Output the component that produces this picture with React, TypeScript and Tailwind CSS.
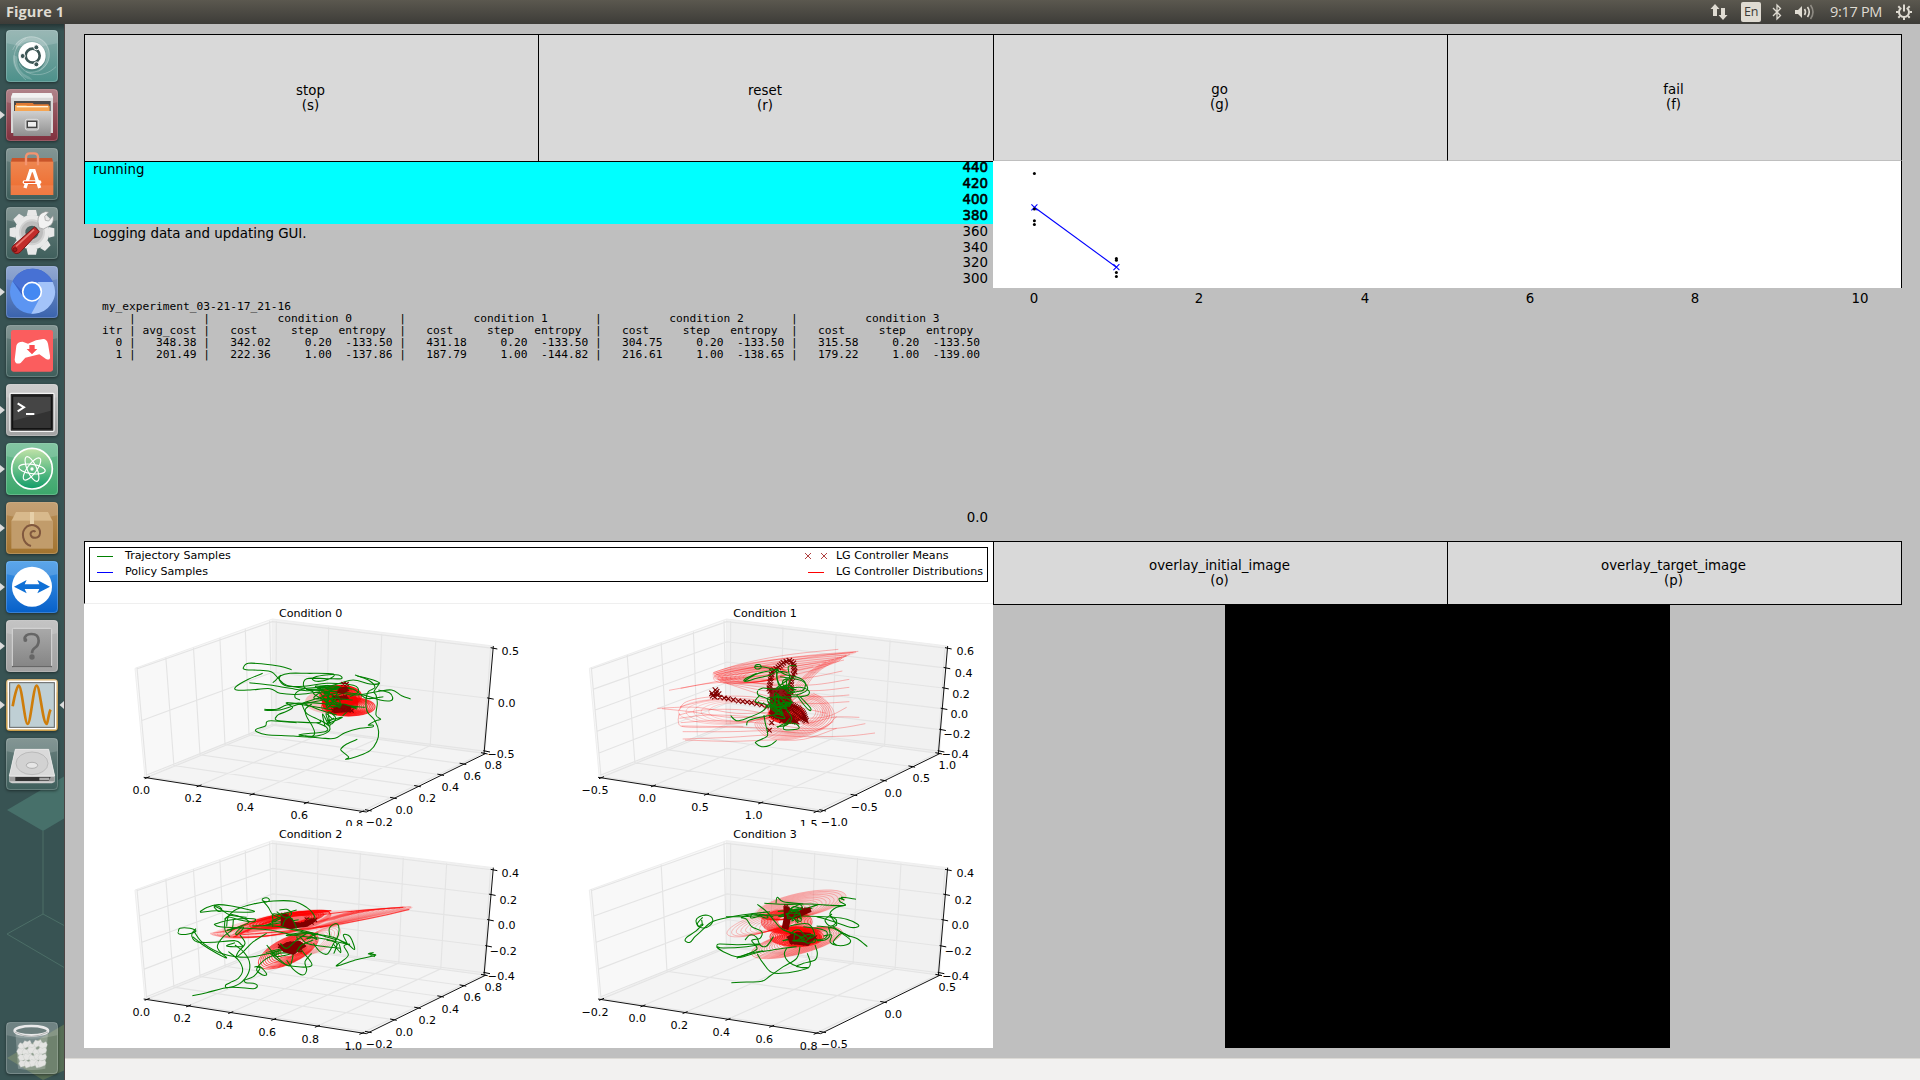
import React from "react";

type Pt = [number, number];

/* ---------- geometry helpers ---------- */

const pts = (s: string): Pt[] => s.trim().split(/\s+/).map((p) => p.split(",").map(Number) as Pt);

const smooth = (p: Pt[]) => {
  let d = `M${p[0][0]} ${p[0][1]}`;
  for (let i = 0; i < p.length - 1; i++) {
    const a = p[i - 1] || p[i];
    const b = p[i];
    const c = p[i + 1];
    const e = p[i + 2] || c;
    d += `C${(b[0] + (c[0] - a[0]) / 6).toFixed(1)} ${(b[1] + (c[1] - a[1]) / 6).toFixed(1)} ${(c[0] - (e[0] - b[0]) / 6).toFixed(1)} ${(c[1] - (e[1] - b[1]) / 6).toFixed(1)} ${c[0]} ${c[1]}`;
  }
  return d;
};

const tangle = (cx: number, cy: number, rx: number, ry: number, seed: number, n: number) => {
  const p: Pt[] = [];
  let s = seed;
  const rnd = () => {
    s = (s * 16807) % 2147483647;
    return s / 2147483647;
  };
  for (let i = 0; i < n; i++) {
    const a = rnd() * Math.PI * 2;
    const r = 0.25 + 0.75 * rnd();
    p.push([Math.round(cx + rx * r * Math.cos(a)), Math.round(cy + ry * r * Math.sin(a))]);
  }
  return smooth(p);
};

const along = (s: string, step: number): Pt[] => {
  const p = pts(s);
  const out: Pt[] = [];
  for (let i = 0; i < p.length - 1; i++) {
    const len = Math.hypot(p[i + 1][0] - p[i][0], p[i + 1][1] - p[i][1]);
    const n = Math.max(1, Math.round(len / step));
    for (let j = 0; j < n; j++)
      out.push([p[i][0] + ((p[i + 1][0] - p[i][0]) * j) / n, p[i][1] + ((p[i + 1][1] - p[i][1]) * j) / n]);
  }
  out.push(p[p.length - 1]);
  return out;
};

const Crosses = ({ at, r = 6 }: { at: Pt[]; r?: number }) => (
  <path
    d={at.map(([x, y]) => `M${x - r} ${y - r}l${2 * r} ${2 * r}m0 ${-2 * r}l${-2 * r} ${2 * r}`).join("")}
    stroke="#800000"
    strokeWidth="3.4"
    fill="none"
  />
);

const Green = ({ lines }: { lines: string[] }) => (
  <g stroke="#008000" strokeWidth="3.2" fill="none" strokeLinejoin="round">
    {lines.map((l, i) => (
      <path key={i} d={l[0] === "M" ? l : smooth(pts(l))} />
    ))}
  </g>
);

const Rings = ({ cx, cy, rx, ry, rot = 0, n = 8, k = 0.75, dx = 0, dy = 0, o = 0.5, w = 2.5 }: { cx: number; cy: number; rx: number; ry: number; rot?: number; n?: number; k?: number; dx?: number; dy?: number; o?: number; w?: number }) => (
  <g fill="none" stroke="#ff0000" strokeWidth={w} strokeOpacity={o}>
    {Array.from({ length: n }, (_, i) => {
      const t = i / n;
      const x = cx + dx * t;
      const y = cy + dy * t;
      return <ellipse key={i} cx={x} cy={y} rx={rx * (1 - k * t)} ry={ry * (1 - k * t * 0.8)} transform={`rotate(${rot} ${x} ${y})`} />;
    })}
  </g>
);

/* ---------- 3D axes ---------- */

const mix = (a: Pt, b: Pt, t: number, k: number): Pt => {
  const f = t / (t + k * (1 - t));
  return [a[0] + (b[0] - a[0]) * f, a[1] + (b[1] - a[1]) * f];
};

const seg = (a: Pt, b: Pt, c?: Pt) => `M${a[0]} ${a[1]}L${b[0]} ${b[1]}${c ? `L${c[0]} ${c[1]}` : ""}`;

type Label = [string, number, number];

const Axes = ({ nx, ny, nz }: { nx: number; ny: number; nz: number }) => {
  const range = (n: number) => Array.from({ length: n + 1 }, (_, i) => i / n);
  const grid: string[] = [];
  const ticks: string[] = [];
  range(nx).forEach((t) => {
    const f = mix([82, 532], [726, 634], t, 1.045);
    const b = mix([468, 374], [1090, 459], t, 1.033);
    const u = mix([469, 63], [1112, 141], t, 1.033);
    grid.push(seg(f, b, u));
    ticks.push(seg([f[0] - 8, f[1] + 4], [f[0] + 7, f[1] - 2]));
  });
  range(ny).forEach((t) => {
    const f = mix([745, 631], [1093, 460], t, 0.905);
    const b = mix([80, 530], [456, 376], t, 0.9);
    const u = mix([51, 203], [449, 62], t, 0.9);
    grid.push(seg(f, b, u));
    ticks.push(seg([f[0] - 10, f[1] - 2], [f[0] + 10, f[1] + 2]));
  });
  range(nz).forEach((t) => {
    const l = mix([78, 526], [50, 207], t, 0.95);
    const c = mix([459, 373], [457, 65], t, 0.97);
    const r = mix([1099, 454], [1121, 145], t, 0.95);
    grid.push(seg(l, c, r));
    ticks.push(seg([r[0] - 9, r[1] - 2], [r[0] + 11, r[1] + 2]));
  });
  return (
    <g>
      <path d="M45 205L457 57V372L75 533Z" fill="#f8f8f8" />
      <path d="M457 57L1120 138L1097 462L457 372Z" fill="#f1f1f1" />
      <path d="M75 533L457 372L1100 460L735 636Z" fill="#f4f4f4" />
      <path d="M45 205L457 57L1120 138M457 57V372M45 205L75 533M457 372L1100 460M75 533L457 372" fill="none" stroke="#eeeeee" strokeWidth="3" />
      <path d={grid.join("")} fill="none" stroke="#e4e4e4" strokeWidth="3.4" />
      <path d="M71 532L739 636L1098 460M1092 462L1120 138" fill="none" stroke="#000" strokeWidth="2.8" />
      <path d={ticks.join("")} fill="none" stroke="#000" strokeWidth="3" />
    </g>
  );
};

const Panel = ({ view, dx, dy, n, title, labels, clip, children }: { view: string; dx: number; dy: number; n: [number, number, number]; title: string; labels: Label[]; clip?: boolean; children: React.ReactNode }) => (
  <svg viewBox={view} preserveAspectRatio="none" className={clip ? "block h-[222px] w-full overflow-hidden" : "block h-[222px] w-full overflow-visible"}>
    <g transform={`translate(${dx} ${dy})`}>
      <Axes nx={n[0]} ny={n[1]} nz={n[2]} />
      <text x={572} y={51 - (dy ? 2 : 0)} fontSize="33.3" textAnchor="middle" fontFamily="DejaVu Sans, sans-serif">
        {title}
      </text>
    </g>
    {children}
    <g fontSize="33.3" textAnchor="middle" fontFamily="DejaVu Sans, sans-serif">
      {labels.map(([t, x, y], i) => (
        <text key={i} x={x} y={y + 11}>
          {t}
        </text>
      ))}
    </g>
  </svg>
);

const Condition0 = () => (
  <Panel
    clip
    view="-108 12 1362 666"
    dx={0}
    dy={0}
    n={[4, 5, 2]}
    title="Condition 0"
    labels={[
      ["0.0", 64, 570], ["0.2", 220, 595], ["0.4", 376, 622], ["0.6", 538, 646], ["0.8", 703, 673],
      ["−0.2", 778, 666], ["0.0", 853, 630], ["0.2", 922, 595], ["0.4", 991, 562], ["0.6", 1057, 528], ["0.8", 1120, 496],
      ["0.5", 1171, 153], ["0.0", 1160, 311], ["−0.5", 1143, 462],
    ]}
  >
    <ellipse cx="640" cy="305" rx="85" ry="38" fill="#ff0000" opacity=".2" />
    <Rings cx={662} cy={288} rx={62} ry={32} n={10} k={0.7} o={0.85} w={4} />
    <Rings cx={685} cy={320} rx={80} ry={28} n={10} k={0.7} o={0.7} w={3.8} />
    <ellipse cx="660" cy="308" rx="55" ry="36" fill="#f40000" opacity=".85" />
    <Green
      lines={[
        "515,209 480,199 430,192 385,190 370,203 378,209 420,211 455,216 475,235 500,256 560,266",
        "428,220 385,238 348,260 350,270 390,270 450,266 480,280 540,283 600,275",
        "388,248 450,255 510,265 560,272 610,268 690,262",
        "458,248 466,242 480,228 510,220 560,220 640,222 625,238 590,244 578,235 610,226 655,225 664,236 620,236 560,236 552,260 580,276",
        "482,225 478,240 500,258 560,258 620,250 700,256 715,275 690,290",
        "433,331 480,330 520,318 560,308 620,312 680,318 735,322",
        "433,328 470,328 500,315 545,310 600,330 650,345",
        "465,356 475,344 500,334 518,322 500,308 570,318 640,330",
        "465,356 475,362 530,366 590,368 600,362 560,340 545,310",
        "590,368 620,382 615,395 550,402 540,406 590,408 625,395 627,378 600,360",
        "530,368 455,362 440,366 436,378 408,388 412,396 440,404 520,408 600,414 645,415 675,398 720,385 757,381 758,375 745,375 768,362 782,358 768,345 772,310 768,285 762,275 775,255 778,248",
        "705,225 745,240 765,262 745,275 738,300 742,335 765,362 776,395 770,425 750,452 715,468 678,478 686,471 664,452 664,445 680,432 712,418",
        "712,228 760,240 778,250 750,252 700,240 660,250 620,262",
        "775,270 808,278 818,292 812,302 780,300 730,285 650,275",
        "620,268 700,285 770,275 815,270 845,287 872,297",
        "575,312 556,328 560,350 575,375 584,398 575,410 555,408",
        "540,300 525,292 532,275 560,265 640,262 700,268 740,295 790,290",
        tangle(630, 272, 85, 20, 71, 16),
        tangle(605, 298, 78, 30, 913, 15),
        tangle(630, 352, 38, 30, 4471, 12),
        tangle(675, 325, 60, 28, 2231, 8),
      ]}
    />
    <path d="M657 264L680 258L688 272L668 282L650 278ZM640 290L680 286L688 296L650 301ZM640 322L668 312L695 322L690 336L640 340Z" fill="#800000" opacity=".9" />
    <Crosses at={pts("670,252 680,252 645,294 660,294 675,290 640,332 655,320 670,330 685,325 695,332")} />
    <Green lines={[tangle(655, 300, 55, 42, 51, 11)]} />
  </Panel>
);

const FAN = [
  "430,218 520,190 650,165 805,148",
  "428,222 540,192 700,168 865,154",
  "432,226 560,200 720,172 858,156",
  "434,230 580,212 740,188 830,168",
  "436,234 580,226 700,208 822,180",
  "440,238 540,232 680,222 790,190 815,175",
  "444,238 560,240 700,235 817,213",
  "448,240 570,250 720,255 838,238",
  "450,244 580,262 730,272 838,262",
  "460,248 600,275 740,290 838,285",
  "470,250 580,285 700,310 838,305",
  "297,271 400,252 470,240 560,236 660,245",
  "332,265 420,250 520,246 640,260",
  "262,325 380,322 500,340 620,335",
  "276,326 360,335 480,352 600,350",
  "330,320 420,300 520,296 620,308",
  "328,330 350,305 430,290 560,292 680,320 770,340",
  "326,345 400,330 520,330 640,350 760,352 830,322",
  "328,355 420,345 560,352 690,372 790,352 868,352",
  "332,368 440,362 580,370 700,385 800,385 886,371",
  "335,378 460,380 600,385 740,390 800,350",
  "338,395 480,395 600,392 720,398 790,365",
  "338,417 480,412 600,405 700,410 830,408 915,399",
  "345,420 480,424 600,420 700,418 800,385",
  "328,340 325,365 340,380 420,382 520,380",
];

const Condition1 = () => (
  <Panel
    clip
    view="-96 12 1365 666"
    dx={13}
    dy={0}
    n={[4, 4, 5]}
    title="Condition 1"
    labels={[
      ["−0.5", 75, 570], ["0.0", 232, 595], ["0.5", 390, 622], ["1.0", 551, 646], ["1.5", 716, 673],
      ["−1.0", 793, 666], ["−0.5", 883, 621], ["0.0", 970, 579], ["0.5", 1054, 535], ["1.0", 1132, 496],
      ["0.6", 1186, 153], ["0.4", 1181, 219], ["0.2", 1173, 282], ["0.0", 1168, 343], ["−0.2", 1161, 402], ["−0.4", 1156, 463],
    ]}
  >
    <path d={smooth(pts("428,222 500,195 620,175 740,165 860,156 770,190 720,230 640,260 540,255 440,240 428,222"))} fill="#ff0000" opacity=".1" />
    <g fill="none" stroke="#ff0000" strokeOpacity=".3" strokeWidth="2.8">
      {FAN.map((l, i) => (
        <path key={i} d={smooth(pts(l))} />
      ))}
      {Array.from({ length: 7 }, (_, i) => (
        <path key={i} d={`M${430 + i * 4} ${218 + i * 3}C${500 + i * 5} ${190 + i * 8} ${640 + i * 4} ${172 + i * 7} ${850 - i * 20} ${158 + i * 7}`} />
      ))}
      {Array.from({ length: 7 }, (_, i) => (
        <path key={i} d={`M${840 - i * 12} ${162 + i * 4}C${790 - i * 7} ${190 + i} ${745 - i * 6} ${200 + i * 2} ${715 - i * 8} ${250 + i * 3}S${690 - i * 4} 280 660 310`} />
      ))}
    </g>
    <g fill="none" stroke="#ff0000" strokeOpacity=".3" strokeWidth="2.6">
      {Array.from({ length: 9 }, (_, i) => (
        <path key={i} d={`M${730 - i * 6} ${280 + i * 3}C${790 - i * 6} ${310 + i} ${815 - i * 7} ${350 - i * 2} ${770 - i * 8} ${380 - i}S${620 + i * 2} ${440 - i * 6} ${575 + i * 5} ${400 - i * 3}S${570 + i * 4} 360 600 350`} />
      ))}
    </g>
    <Rings cx={725} cy={330} rx={56} ry={48} rot={10} n={6} k={0.5} o={0.22} w={2.4} />
    <Rings cx={460} cy={335} rx={135} ry={38} n={5} k={0.4} dx={60} o={0.22} w={2.4} />
    <Rings cx={535} cy={225} rx={105} ry={24} rot={-6} n={8} k={0.4} dx={60} o={0.25} w={2.4} />
    <ellipse cx="650" cy="342" rx="55" ry="30" fill="#ff0000" opacity=".8" />
    <path d="M598 265L655 260L665 300L640 345L600 340ZM600 340L650 335L680 350L650 375Z" fill="#800000" opacity=".9" />
    <Crosses at={along("450,292 475,296 505,303 545,308 590,318", 14)} r={7} />
    <Crosses at={pts("436,270 426,280 438,281 446,282 434,290 428,287 440,275")} r={8} />
    <Crosses at={along("598,265 602,240 606,215 625,202 640,188 658,182 670,190 674,215 664,240 662,275 640,300", 8)} r={8} />
    <Crosses at={along("610,300 660,312 685,325 700,340 708,362 690,350 660,325 630,330 605,345 640,355 680,365", 6)} r={8} />
    <Crosses at={pts("605,368 598,391 600,274 620,280 645,270 658,285 615,350 635,362 652,362")} r={7} />
    <Green
      lines={[
        "555,205 556,196 570,194 573,204 560,207 555,200 580,201 610,208 630,215 650,225 690,235 706,250 700,270 680,275 650,280",
        "524,243 560,222 600,212 625,208 600,225 560,235 528,244 524,238 560,220",
        "620,208 622,240 640,265 660,245 655,200 680,198",
        "565,270 580,264 610,268 650,265 690,262 716,272 714,285 690,290 640,290",
        "563,272 565,285 600,300 620,320",
        "690,290 700,300 722,325 718,331 700,312 680,285",
        "570,285 556,305 590,315 575,335 530,355 500,362 482,347",
        "530,376 535,362 570,352 610,345 640,340",
        "582,345 586,370 592,395 590,410 560,424 558,430 575,440 600,436 620,421",
        "622,383 640,372 670,370 687,380 680,388 640,386 660,355",
        "620,380 650,375 665,355 650,330",
        "630,230 665,235 700,245 712,270 670,285 640,265",
        tangle(630, 300, 38, 34, 77, 20),
        tangle(622, 328, 38, 38, 5177, 14),
        tangle(655, 262, 40, 26, 9112, 10),
        tangle(635, 235, 20, 45, 331, 6),
      ]}
    />
  </Panel>
);

const Condition2 = () => (
  <Panel
    view="-108 18 1362 666"
    dx={0}
    dy={5}
    n={[5, 5, 4]}
    title="Condition 2"
    labels={[
      ["0.0", 64, 576], ["0.2", 187, 595], ["0.4", 313, 616], ["0.6", 442, 637], ["0.8", 571, 658], ["1.0", 700, 678],
      ["−0.2", 778, 672], ["0.0", 853, 636], ["0.2", 922, 601], ["0.4", 991, 567], ["0.6", 1057, 531], ["0.8", 1120, 501],
      ["0.4", 1171, 159], ["0.2", 1165, 240], ["0.0", 1160, 315], ["−0.2", 1150, 393], ["−0.4", 1144, 468],
    ]}
  >
    <path d="M270 341C330 315 380 300 430 290C520 265 600 265 635 272C720 270 800 262 870 259C890 262 870 270 830 276C740 295 640 325 560 335C470 350 380 358 330 357C300 350 270 347 270 341Z" fill="#ff0000" opacity=".16" />
    <g fill="none" stroke="#ff0000" strokeOpacity=".28" strokeWidth="2.4">
      {Array.from({ length: 12 }, (_, i) => (
        <path key={i} d={`M${640 - i * 6} ${300 + i}C${700 - i * 3} ${275 + i * 0.5} ${800 - i * 8} ${264 + i * 0.4} ${868 - i * 16} ${260 + i * 1.4}C${895 - i * 16} ${262 + i} ${800 - i * 10} ${280 + i} ${600 - i * 5} ${322 + i}`} />
      ))}
      {Array.from({ length: 9 }, (_, i) => (
        <path key={i} d={`M${270 + i * 10} ${340 - i * 0.5}C${360 + i * 4} ${330 - i * 3} ${420 + i * 4} ${290 - i} ${560 + i * 4} ${273}C${660} ${262 + i} ${640} ${285 + i * 2} ${560} ${318 + i}S${340} ${365 - i} ${275 + i * 8} ${343}`} />
      ))}
    </g>
    <g fill="none" stroke="#ff0000" strokeWidth="3.4" strokeOpacity=".7">
      <path d="M330 335C400 290 520 270 634 272L560 280C480 290 390 320 340 352M600 322C700 306 790 288 868 268M600 285C700 270 790 266 850 262" />
      <path d="M350 345C420 340 520 335 600 320M345 350C420 310 500 285 620 275M380 335C440 300 540 280 600 285" />
    </g>
    <path d="M335 345C400 300 500 272 634 271C600 300 540 325 460 330C400 334 360 345 335 345Z" fill="#ff0000" opacity=".45" />
    <Rings cx={500} cy={300} rx={112} ry={20} rot={-9} n={8} k={0.6} dx={10} o={0.6} w={4} />
    <Rings cx={505} cy={392} rx={98} ry={38} rot={-26} n={11} k={0.65} dx={15} dy={-8} o={0.65} w={3} />
    <Rings cx={600} cy={362} rx={70} ry={28} rot={-30} n={6} k={0.4} dx={-30} dy={8} o={0.25} w={2.4} />
    <Green
      lines={[
        "240,275 262,262 290,254 330,257 380,268 402,275 340,276 290,272 240,277",
        "282,256 298,260 305,270 295,274 282,260 300,266 330,285 380,292",
        "427,242 428,236 443,234 448,241 438,246 429,243 445,262 460,285 500,300",
        "320,320 325,290 350,268 400,252 460,243 520,244 560,262 580,282 583,298 560,295",
        "285,312 330,300 400,296 400,305 360,300 320,292 315,330 330,350",
        "282,312 300,320 380,325 450,330 520,345 600,355 650,365 690,375",
        "175,335 180,325 210,325 228,333 205,342 180,343 173,337",
        "228,326 216,340 218,355 232,366 280,367 345,362 362,372 365,380 320,378 345,368",
        "218,350 245,372 290,400 320,414 300,395 292,378 310,350 335,330 340,300",
        "222,334 250,370 310,402 380,412 440,402 500,385",
        "360,345 375,370 355,395 350,410 370,395 400,365 440,340",
        "325,395 355,420 368,450 355,475 330,488 317,495 322,503 360,490 385,460 388,425 370,395 345,375",
        "217,527 260,518 330,502 400,506 412,497 400,490 378,488 374,480 400,470 420,445 410,442",
        "403,441 420,440 440,462 428,465 410,447 440,415 480,400",
        "500,420 520,448 548,465 560,450 555,425 575,400",
        "450,400 500,435 575,437 545,390 530,350",
        "440,375 470,410 508,438 520,400",
        "480,320 560,338 640,352 680,372 670,345 690,350 704,388 680,370 640,352",
        "630,350 628,325 645,311 656,318 655,345 640,372 622,402 600,395 580,370",
        "620,360 650,370 642,400 655,370 662,398 640,372",
        "690,372 672,378 685,405 665,425 650,438 700,422 766,406 745,402 760,398 750,404 765,410",
        "540,350 560,370 600,378 660,385",
        "395,318 460,318 540,330 600,345 650,360",
        tangle(475, 298, 70, 26, 911, 10),
        tangle(350, 320, 45, 38, 404, 8),
        tangle(500, 388, 85, 34, 6121, 13),
        tangle(550, 345, 65, 26, 733, 9),
      ]}
    />
    <path d="M482 290L495 278L512 290L520 305L545 308L575 295L590 302L562 320L510 327L482 318ZM475 380L500 366L540 362L560 378L520 405L490 396Z" fill="#800000" />
    <Crosses at={pts("560,298 575,308 585,300 550,312 490,285 500,300 480,378 500,388 520,396 540,390 550,375 515,370")} />
    <Green lines={["470,275 490,290 515,296 530,325", "478,270 500,268 515,282 495,300 488,318", "480,370 500,385 530,360 560,340", "530,395 545,375 580,360", "470,285 500,278 530,270"]} />
  </Panel>
);

const Condition3 = () => (
  <Panel
    view="-96 18 1365 666"
    dx={13}
    dy={5}
    n={[5, 2, 4]}
    title="Condition 3"
    labels={[
      ["−0.2", 75, 576], ["0.0", 202, 595], ["0.2", 328, 616], ["0.4", 454, 637], ["0.6", 583, 658], ["0.8", 716, 678],
      ["−0.5", 793, 672], ["0.0", 970, 583], ["0.5", 1132, 501],
      ["0.4", 1186, 159], ["0.2", 1180, 240], ["0.0", 1171, 315], ["−0.2", 1165, 393], ["−0.4", 1157, 468],
    ]}
  >
    <ellipse cx="690" cy="255" rx="140" ry="36" transform="rotate(-12 690 255)" fill="#ff0000" opacity=".1" />
    <Rings cx={695} cy={255} rx={136} ry={36} rot={-12} n={12} k={0.7} dx={-50} dy={25} o={0.3} w={2.2} />
    <Rings cx={580} cy={308} rx={114} ry={28} rot={-17} n={9} k={0.6} dx={60} dy={0} o={0.3} w={2.2} />
    <Rings cx={680} cy={368} rx={140} ry={35} rot={-14} n={15} k={0.7} dx={20} dy={-12} o={0.38} w={2.6} />
    <Rings cx={650} cy={305} rx={76} ry={36} n={12} k={0.7} o={0.6} w={3.2} />
    <Rings cx={680} cy={350} rx={80} ry={30} n={12} k={0.8} o={0.7} w={3.2} />
    <ellipse cx="705" cy="352" rx="50" ry="22" fill="#ff0000" opacity=".75" />
    <Green
      lines={[
        "395,312 385,320 378,302 388,290 412,286 428,298 420,316 398,324 382,312 398,292",
        "400,312 375,335 350,352 346,363 360,367 375,350 395,332 425,306 470,293 540,282 600,275",
        "395,300 398,318",
        "468,290 520,290 600,285 700,288 790,292 830,298 862,312 864,320 840,322 800,308 740,290",
        "583,250 640,253 720,252 780,256 826,256 810,245 808,235 822,240 815,232 858,238",
        "618,250 622,232 640,245 700,252",
        "562,253 590,275 615,305 640,330 700,350",
        "826,256 800,262 780,280 790,300 800,315 775,325",
        "786,282 765,300 780,318 797,310 798,298 780,288",
        "440,378 448,372 500,374 570,372 530,380 460,384 440,380 460,395 500,410 540,400 580,392",
        "500,415 560,388 545,362 570,355 575,335 545,320 530,298 515,292 560,282 610,290",
        "502,413 520,410 560,398 640,385 680,380",
        "525,360 540,345 560,352 570,375 590,378 610,350",
        "562,402 580,430 615,460 715,443 712,400",
        "484,488 530,486 575,484 600,468 640,440 680,415 690,380",
        "650,385 643,402 655,425 690,442 716,443 680,440 700,430 735,420 742,400 735,375",
        "760,348 785,345 780,365 800,376 830,374 842,362 830,350 790,325 740,318",
        "790,322 830,345 862,356 892,380",
        "840,350 815,340 790,365 800,376",
        "775,320 780,345 765,360 740,362",
        "700,320 740,325 770,335 765,355 730,360",
        tangle(670, 265, 92, 15, 19, 13),
        tangle(655, 288, 55, 32, 88, 10),
        tangle(560, 288, 40, 12, 555, 7),
        tangle(680, 345, 85, 38, 23, 9),
      ]}
    />
    <path d="M640 258L658 260L662 278L685 272L720 262L725 275L692 290L662 300L655 330L635 325L642 290ZM650 350L680 335L720 338L738 352L715 378L660 372Z" fill="#800000" />
    <Crosses at={pts("648,260 650,280 646,310 700,268 715,270 665,345 680,355 700,345 720,350 735,352 670,368 705,370")} />
    <Green lines={[tangle(688, 352, 46, 32, 7070, 16), tangle(665, 285, 40, 36, 42, 9)]} />
  </Panel>
);

/* ---------- cost chart ---------- */

const Y_TICKS: [string, number][] = [
  ["440", 167.3], ["420", 183.3], ["400", 199.3], ["380", 215.3], ["360", 231.3], ["340", 247.3], ["320", 262.3], ["300", 278.3],
];
const X_TICKS: [string, number][] = [["0", 1034], ["2", 1199], ["4", 1365], ["6", 1530], ["8", 1695], ["10", 1860]];

const CostChart = () => (
  <svg viewBox="993 161 909 127" className="block h-[127px] w-[909px] overflow-visible">
    <rect x="993" y="161" width="909" height="127" fill="#fff" />
    <path d="M1901.5 161V288" stroke="#000" />
    <path d="M1034.4 207.3L1116.4 267.2" stroke="#0000ff" strokeWidth="1.1" />
    <path d="M1031.4 204.3l6 6m0 -6l-6 6M1113.4 264.2l6 6m0 -6l-6 6" stroke="#0000ff" strokeWidth="1.1" />
    {[[1034.4, 173.5], [1034.4, 209], [1034.4, 220.7], [1034.4, 224.5], [1116.4, 258.5], [1116.4, 260.3], [1116.4, 272.5], [1116.4, 276.5]].map(([x, y], i) => (
      <circle key={i} cx={x} cy={y} r="1.5" />
    ))}
    <g fontSize="13.33" fontFamily="DejaVu Sans, sans-serif">
      {Y_TICKS.map(([t, y], i) => (
        <text key={t} x="988" y={y + 4.6} textAnchor="end" stroke={i < 4 ? "#000" : "none"} strokeWidth="0.6">
          {t}
        </text>
      ))}
      {X_TICKS.map(([t, x]) => (
        <text key={t} x={x} y="302.500" textAnchor="middle">
          {t}
        </text>
      ))}
      <text x="988" y="521.500" textAnchor="end">
        0.0
      </text>
    </g>
  </svg>
);

/* ---------- launcher icons ---------- */

const Gloss = () => <path d="M6 2H150Q154 2 154 8V40Q78 60 2 40V8Q2 2 6 2Z" fill="#fff" opacity=".16" />;

const DashIcon = () => (
  <>
    <g fill="none" stroke="#fff" strokeOpacity=".25" strokeWidth="3">
      <path d="M20 60C40 10 110 5 128 60C140 110 90 135 60 125M60 150C10 110 15 50 60 25M150 110C110 150 50 135 40 100" />
    </g>
    <path d="M30 40C60 5 120 15 130 60C135 90 120 120 90 128C125 110 125 50 90 35C65 28 40 40 30 60Z" fill="#fff" opacity=".2" />
    <path d="M22 75C15 110 40 145 80 150L70 140C45 130 30 110 34 80Z" fill="#fff" opacity=".18" />
    <circle cx="78" cy="79" r="43" fill="#2c5754" opacity=".35" />
    <circle cx="78" cy="77" r="41" fill="#fff" />
    <circle cx="80" cy="77" r="21" fill="none" stroke="#3d5655" strokeWidth="8" />
    <g fill="#3d5655" stroke="#fff" strokeWidth="3">
      <circle cx="50" cy="78" r="7.5" />
      <circle cx="91" cy="52" r="7.5" />
      <circle cx="91" cy="103" r="7.5" />
    </g>
  </>
);

const FilesIcon = () => (
  <>
    <path d="M20 12H136L141 24V132H15V24Z" fill="#d9d9d9" />
    <path d="M20 12H136L141 26H15Z" fill="#f2f2f2" />
    <rect x="24" y="36" width="110" height="32" fill="#4a4a4a" />
    <path d="M30 42H80L84 46H128V66H30Z" fill="#e07a35" />
    <path d="M27 48H60L64 50H131V68H27Z" fill="#f6a552" />
    <rect x="32" y="51" width="94" height="4" fill="#fff3dc" />
    <path d="M20 66H136L134 141H22Z" fill="url(#steel)" />
    <rect x="58" y="91" width="40" height="32" rx="6" fill="#b5b5b5" stroke="#dedede" strokeWidth="3" />
    <rect x="64" y="97" width="28" height="18" fill="#eee" stroke="#444" strokeWidth="4" />
  </>
);

const SoftwareIcon = () => (
  <>
    <path d="M18 30H138L142 44H14Z" fill="#c8552a" />
    <rect x="14" y="41" width="128" height="100" fill="url(#bag)" />
    <rect x="14" y="112" width="128" height="29" fill="#fff" opacity=".1" />
    <path d="M60 52V28Q60 16 72 16H84Q96 16 96 28V52" fill="none" stroke="#f49470" strokeWidth="7" />
    <path d="M57 120L74 68H84L101 120" fill="none" stroke="#fff" strokeWidth="10" />
    <rect x="50" y="97" width="56" height="11" rx="5" fill="#fff" />
    <rect x="54" y="100" width="34" height="5" fill="#e95420" />
  </>
);

const SettingsIcon = () => (
  <>
    <g fill="#e8e8e8">
      <circle cx="78" cy="76" r="52" />
      {[0, 45, 90, 135, 180, 225, 270, 315].map((a) => (
        <path key={a} d="M62 26L66 9H90L94 26Z" transform={`rotate(${a} 78 76)`} />
      ))}
    </g>
    <circle cx="78" cy="76" r="36" fill="#bdbdbd" stroke="#d2d2d2" strokeWidth="6" />
    <circle cx="78" cy="76" r="20" fill="#48605e" />
    <path d="M99 62L96 44Q94 20 118 14L128 15L116 28L118 40L128 42L141 26Q146 50 128 58L112 66Z" fill="#f2f2f2" stroke="#999" strokeWidth="2" />
    <path d="M86 60L100 74L44 134Q32 145 22 135Q12 124 24 114Z" fill="#c22d2b" stroke="#7e1616" strokeWidth="3" />
    <path d="M84 68L30 118" stroke="#ea7b72" strokeWidth="5" />
    <circle cx="27" cy="128" r="6" fill="#a01818" stroke="#5a0f0f" strokeWidth="2" />
  </>
);

const ChromiumIcon = () => (
  <>
    <circle cx="78" cy="77" r="66" fill="#5c95f2" />
    <path d="M20 46A66 66 0 0 1 140 48H78L50 90Z" fill="#3a63c6" />
    <path d="M20 46A66 66 0 0 1 140 48H78Q52 52 48 74Z" fill="#4771d4" />
    <path d="M140 48A66 66 0 0 1 76 143L106 88L96 48Z" fill="#a3c3f9" />
    <circle cx="78" cy="77" r="28" fill="#4488f2" stroke="#fff" strokeWidth="5" />
  </>
);

const GameIcon = () => (
  <>
    <rect x="15" y="15" width="126" height="125" rx="7" fill="#fb5d5e" />
    <path d="M31 62Q34 50 50 50L66 56L90 46L112 42Q122 42 126 56L132 92Q134 108 120 102L100 88L58 98L44 114Q28 120 26 104Z" fill="#fff" />
    <path d="M70 60H86V72H94L78 88L62 72H70Z" fill="#fb4d50" />
  </>
);

const TerminalIcon = () => (
  <>
    <rect x="12" y="28" width="132" height="114" rx="3" fill="#2d2d2d" stroke="#f4f4f4" strokeWidth="4" />
    <rect x="20" y="36" width="116" height="98" fill="#333" stroke="#0e0e0e" strokeWidth="3" />
    <path d="M22 38H134V80L22 110Z" fill="#fff" opacity=".09" />
    <path d="M35 58L54 70L35 82" fill="none" stroke="#fff" strokeWidth="6" />
    <rect x="60" y="87" width="25" height="6" fill="#fff" />
  </>
);

const AtomIcon = () => (
  <>
    <circle cx="78" cy="77" r="61" fill="url(#atom)" stroke="#fff" strokeWidth="5" />
    <g fill="none" stroke="#fff" strokeWidth="3.5">
      <ellipse cx="78" cy="78" rx="40" ry="14" transform="rotate(8 78 78)" />
      <ellipse cx="78" cy="78" rx="40" ry="14" transform="rotate(66 78 78)" />
      <ellipse cx="78" cy="78" rx="40" ry="14" transform="rotate(126 78 78)" />
    </g>
    <circle cx="78" cy="78" r="5" fill="#fff" />
  </>
);

const PackageIcon = () => (
  <>
    <path d="M30 30H126L140 58H16Z" fill="#d8b98c" />
    <rect x="16" y="56" width="125" height="84" fill="#c19c6b" />
    <rect x="72" y="30" width="12" height="36" fill="#e6cfa8" />
    <path d="M75 132C50 125 42 90 62 74C80 62 104 74 102 94C100 110 78 112 74 98C72 88 84 84 88 90" fill="none" stroke="#81583e" strokeWidth="6" />
  </>
);

const TeamViewerIcon = () => (
  <>
    <circle cx="78" cy="77" r="60" fill="#fff" />
    <path d="M24 77L62 57L56 70H100L94 57L132 77L94 97L100 84H56L62 97Z" fill="#0f70d6" />
  </>
);

const UnknownIcon = () => (
  <>
    <rect x="19" y="25" width="118" height="115" rx="4" fill="url(#steel2)" stroke="#d8d8d8" strokeWidth="3" />
    <path d="M18 140H138" stroke="#555" strokeWidth="3" />
    <path d="M56 58Q56 42 76 42Q98 42 98 62Q98 76 86 84Q78 90 78 100" fill="none" stroke="#666" strokeWidth="8" />
    <circle cx="58" cy="60" r="6" fill="#666" />
    <circle cx="78" cy="111" r="8" fill="#666" />
  </>
);

const WaveIcon = () => (
  <>
    <rect x="7" y="7" width="142" height="142" fill="#bfcfd4" stroke="#fff" strokeWidth="5" />
    <rect x="11" y="11" width="134" height="134" fill="none" stroke="#666" strokeWidth="3" />
    <path d="M20 82C28 38 34 20 38 20C48 20 56 135 65 135C74 135 82 20 92 20C102 20 110 135 122 135C126 132 128 100 134 92" fill="none" stroke="#ce7d0a" strokeWidth="8" />
  </>
);

const DiskIcon = () => (
  <>
    <path d="M28 34H128L146 112V132L138 136H18L10 132V112Z" fill="#cfcfcf" />
    <path d="M28 34H128L146 114H10Z" fill="#dadada" stroke="#f2f2f2" strokeWidth="2" />
    <ellipse cx="78" cy="76" rx="48" ry="34" fill="#d2d2d2" stroke="#aeaeae" strokeWidth="2" />
    <ellipse cx="78" cy="82" rx="17" ry="9" fill="#e6e6e6" stroke="#999" strokeWidth="2" />
    <path d="M12 116H144V130H12Z" fill="#9a9a9a" />
    <path d="M28 117H134L128 129H28Z" fill="#333" />
    <rect x="100" y="119" width="30" height="8" fill="#aaa" />
  </>
);

const TrashIcon = () => (
  <>
    <path d="M28 30L36 140Q76 148 118 140L126 30Z" fill="#fff" opacity=".22" />
    <g fill="#e4e4e2">
      {pts("48,72 62,66 78,74 94,64 110,70 44,88 60,90 76,84 92,90 108,86 48,106 64,104 80,108 96,104 108,106 50,124 66,126 82,122 98,126 106,124").map(([x, y], i) => (
        <path key={i} d={`M${x - 12} ${y}l6 -10l8 3l8 -4l4 9l-3 8l-8 3l-9 3z`} stroke="#c6c9c6" strokeWidth="1.2" />
      ))}
    </g>
    <ellipse cx="76" cy="26" rx="50" ry="14" fill="#6d7f7e" stroke="#eaeaea" strokeWidth="8" />
    <path d="M26 30Q76 56 126 30" fill="none" stroke="#b5b5b5" strokeWidth="3" />
  </>
);

type Tile = { icon: React.FC; bg: string; run?: boolean; active?: boolean };

const GLASS = "bg-linear-to-b from-[#6c8280] to-[#3f5f5c]";

const TILES: Tile[] = [
  { icon: DashIcon, bg: "bg-linear-to-b from-[#86aaa7] to-[#4c918b]" },
  { icon: FilesIcon, bg: "bg-linear-to-b from-[#a06a72] to-[#80303e]", run: true },
  { icon: SoftwareIcon, bg: GLASS },
  { icon: SettingsIcon, bg: GLASS },
  { icon: ChromiumIcon, bg: "bg-linear-to-b from-[#7e98c9] to-[#3a63ad]", run: true },
  { icon: GameIcon, bg: GLASS },
  { icon: TerminalIcon, bg: "bg-linear-to-b from-[#c4c4c4] to-[#a3a3a3]", run: true },
  { icon: AtomIcon, bg: "bg-linear-to-b from-[#6cbb92] to-[#3ba76b]", run: true },
  { icon: PackageIcon, bg: "bg-linear-to-b from-[#b98f5a] to-[#a2742f]", run: true },
  { icon: TeamViewerIcon, bg: "bg-linear-to-b from-[#3d96e6] to-[#0560c9]", run: true },
  { icon: UnknownIcon, bg: "bg-linear-to-b from-[#b9b9b9] to-[#a1a1a1]", run: true },
  { icon: WaveIcon, bg: "bg-linear-to-b from-[#c79c50] to-[#bd861f]", run: true, active: true },
  { icon: DiskIcon, bg: GLASS },
];

const LauncherTile = ({ tile }: { tile: Tile }) => {
  const Icon = tile.icon;
  return (
    <div className="flex h-[52px] w-[65px] shrink-0 items-center">
      <svg viewBox="0 0 4 8" className="h-2 w-[6px] pr-[1px]" preserveAspectRatio="none">
        {tile.run && <path d="M0 0L4 4L0 8Z" fill="#dcdcdc" />}
      </svg>
      <div className={`h-[52px] w-[52px] overflow-hidden rounded-[4px] shadow-[0_1px_3px_rgba(0,0,0,0.45)] ${tile.bg}`}>
        <svg viewBox="0 0 156 156" className="block h-[52px] w-[52px]">
          <Gloss />
          <Icon />
          <rect x="1.5" y="1.5" width="153" height="153" rx="11" fill="none" stroke="#fff" strokeOpacity=".2" strokeWidth="3" />
        </svg>
      </div>
      <svg viewBox="0 0 7 8" className="h-2 w-[7px]">
        {tile.active && <path d="M6 0L1.500 4L6 8Z" fill="#dcdcdc" />}
      </svg>
    </div>
  );
};

const Launcher = () => (
  <aside className="relative flex h-[1056px] w-[65px] shrink-0 flex-col justify-between overflow-hidden border-r border-[#4c4444] bg-[#385353] pt-[6px] pb-[6px]">
    <svg viewBox="0 24 65 1056" className="absolute inset-0 h-[1056px] w-[65px]">
      <defs>
        <linearGradient id="steel" x1="0" y1="0" x2="0" y2="1"><stop offset="0" stopColor="#cfcfcf" /><stop offset="1" stopColor="#8f8f8f" /></linearGradient>
        <linearGradient id="steel2" x1="0" y1="0" x2="0" y2="1"><stop offset="0" stopColor="#a9a9a9" /><stop offset="1" stopColor="#858585" /></linearGradient>
        <linearGradient id="bag" x1="0" y1="0" x2="0" y2="1"><stop offset="0" stopColor="#ee8650" /><stop offset="1" stopColor="#ee6a2c" /></linearGradient>
        <linearGradient id="atom" x1="0" y1="0" x2="0" y2="1"><stop offset="0" stopColor="#c2e3a8" /><stop offset="1" stopColor="#109c68" /></linearGradient>
        <linearGradient id="topshade" x1="0" y1="0" x2="0" y2="1"><stop offset="0" stopColor="#000" stopOpacity=".35" /><stop offset="1" stopColor="#000" stopOpacity="0" /></linearGradient>
      </defs>
      <rect y="24" width="65" height="7" fill="url(#topshade)" />
      <path d="M7 810L65 776V818L43 831Z" fill="#47706a" />
      <path d="M43 831V914M65 926L43 914L7 934L65 968" fill="none" stroke="#4c6e67" />
      <path d="M7 1058L65 1024V1070L43 1080Z" fill="#566d55" />
    </svg>
    <div className="relative flex flex-col gap-[7px]">
      {TILES.map((t, i) => (
        <LauncherTile key={i} tile={t} />
      ))}
    </div>
    <div className="relative">
      <LauncherTile tile={{ icon: TrashIcon, bg: "bg-white/15" }} />
    </div>
  </aside>
);

/* ---------- top bar ---------- */

const TopBar = () => (
  <header className="flex h-6 items-center bg-linear-to-b from-[#5b584f] to-[#3d3c38] pr-2 pl-[6px] font-['Open_Sans',sans-serif] text-[#dfdbd2]">
    <span className="flex-1 text-[14.5px] leading-6 font-bold tracking-[0.1px]">Figure 1</span>
    <svg viewBox="0 0 18 18" className="mr-[13px] h-[18px] w-[18px]" fill="#dfdbd2">
      <path d="M5 1L9.500 6H7V13H3V6H0.500ZM13 17L8.500 12H11V5H15V12H17.500Z" />
    </svg>
    <span className="mr-[11px] flex h-5 w-5 items-center justify-center rounded-[2px] bg-[#dfdbd2] text-[12.500px] tracking-tight text-[#3c3b37]">En</span>
    <svg viewBox="0 0 10 18" className="mr-[13px] h-[18px] w-[10px]" fill="none" stroke="#dfdbd2" strokeWidth="1.3">
      <path d="M1 5L8.500 12.500L5 16V2L8.500 5.500L1 13" />
    </svg>
    <svg viewBox="0 0 20 16" className="mr-[15px] h-4 w-5" fill="none" stroke="#dfdbd2">
      <path d="M0 6H3L7 2V14L3 10H0Z" fill="#dfdbd2" stroke="none" />
      <path d="M9.500 5Q11.500 8 9.500 11M12.500 3Q16 8 12.500 13" strokeWidth="1.600" />
      <path d="M15.500 1Q20.500 8 15.500 15" strokeWidth="1.600" opacity=".45" />
    </svg>
    <span className="mr-[13px] w-[53px] text-[14.5px] leading-6 tracking-[-0.3px] whitespace-nowrap">9:17 PM</span>
    <svg viewBox="0 0 16 16" className="h-4 w-4" fill="none" stroke="#dfdbd2">
      <path d="M5.300 3.800A5 5 0 1 0 10.700 3.800" strokeWidth="2" />
      <path d="M8 0.500V7.500" strokeWidth="2" />
      <path d="M2.300 2.300l1.600 1.600M13.700 2.300l-1.600 1.600M0 8h2.500M13.500 8H16M2.300 13.700l1.600 -1.600M13.700 13.700l-1.600 -1.600M8 13.500V16" strokeWidth="2" />
    </svg>
  </header>
);

/* ---------- figure ---------- */

const FigureButton = ({ label, hint, className }: { label: string; hint: string; className: string }) => (
  <button className={`flex flex-col items-center justify-center border-t border-l border-black bg-[#d9d9d9] pr-[2px] pb-[1px] text-[13.33px] leading-[15px] ${className}`}>
    <span>{label}</span>
    <span>{hint}</span>
  </button>
);

const TABLE = [
  "my_experiment_03-21-17_21-16",
  "    |          |" + [0, 1, 2, 3].map((n) => `          condition ${n}       `).join("|"),
  "itr | avg_cost |" + [0, 1, 2, 3].map(() => "   cost     step   entropy  ").join("|"),
  "  0 |   348.38 |   342.02     0.20  -133.50 |   431.18     0.20  -133.50 |   304.75     0.20  -133.50 |   315.58     0.20  -133.50",
  "  1 |   201.49 |   222.36     1.00  -137.86 |   187.79     1.00  -144.82 |   216.61     1.00  -138.65 |   179.22     1.00  -139.00",
].join("\n");

const Legend = () => (
  <div className="h-[63px] border-t border-b border-l border-black border-b-[#efefef] bg-white pt-[5px] pl-1 text-[11.11px]">
    <div className="flex h-[35px] w-[899px] justify-between border border-black pr-1 pl-[7px]">
      <div className="flex flex-col leading-4">
        <div className="flex items-center gap-3">
          <span className="h-px w-4 bg-[#008000]" />
          <span>Trajectory Samples</span>
        </div>
        <div className="flex items-center gap-3">
          <span className="h-px w-4 bg-[#0000ff]" />
          <span>Policy Samples</span>
        </div>
      </div>
      <div className="flex flex-col leading-4">
        <div className="flex items-center gap-2">
          <svg viewBox="0 0 24 8" className="h-2 w-6" stroke="#b04040" strokeWidth="1">
            <path d="M1 1l6 6m0 -6l-6 6M17 1l6 6m0 -6l-6 6" />
          </svg>
          <span>LG Controller Means</span>
        </div>
        <div className="flex items-center gap-3">
          <span className="ml-1 h-px w-4 bg-[#ff0000]" />
          <span>LG Controller Distributions</span>
        </div>
      </div>
    </div>
  </div>
);

export default function App() {
  return (
    <div className="h-[1080px] w-[1920px] overflow-hidden bg-[#bfbfbf]">
      <TopBar />
      <div className="flex">
        <Launcher />
        <div className="flex h-[1056px] flex-1 flex-col font-['DejaVu_Sans',sans-serif] text-black">
          <main className="h-[1034px] pt-[10px] pl-[19px]">
            <div className="grid h-[127px] w-[1818px] grid-cols-[454px_455px_454px_455px]">
              <FigureButton label="stop" hint="(s)" className="" />
              <FigureButton label="reset" hint="(r)" className="" />
              <FigureButton label="go" hint="(g)" className="border-b border-b-[#bfbfbf]" />
              <FigureButton label="fail" hint="(f)" className="border-r border-b border-b-[#bfbfbf]" />
            </div>
            <div className="flex h-[380px] w-[1818px]">
              <section className="w-[909px]">
                <div className="h-[63px] border-t border-l border-black bg-[#00ffff] pl-2 text-[13.33px] leading-4">running</div>
                <div className="h-[77px] pt-[2px] pl-[9px] text-[13.4px] leading-4">Logging data and updating GUI.</div>
                <pre className="pl-[18px] font-['DejaVu_Sans_Mono',monospace] text-[11.22px] leading-3">{TABLE}</pre>
              </section>
              <section className="w-[909px]">
                <CostChart />
              </section>
            </div>
            <div className="flex w-[1818px]">
              <section className="w-[909px]">
                <Legend />
                <div className="grid h-[444px] grid-cols-[454px_455px] bg-white">
                  <Condition0 />
                  <Condition1 />
                  <Condition2 />
                  <Condition3 />
                </div>
              </section>
              <section className="w-[909px]">
                <div className="grid h-[64px] grid-cols-[454px_455px]">
                  <FigureButton label="overlay_initial_image" hint="(o)" className="border-b" />
                  <FigureButton label="overlay_target_image" hint="(p)" className="border-r border-b" />
                </div>
                <div className="mx-auto h-[443px] w-[445px] bg-black" />
              </section>
            </div>
          </main>
          <footer className="h-[22px] border-t border-[#dcdad5] bg-[#f2f1f0]" />
        </div>
      </div>
    </div>
  );
}
